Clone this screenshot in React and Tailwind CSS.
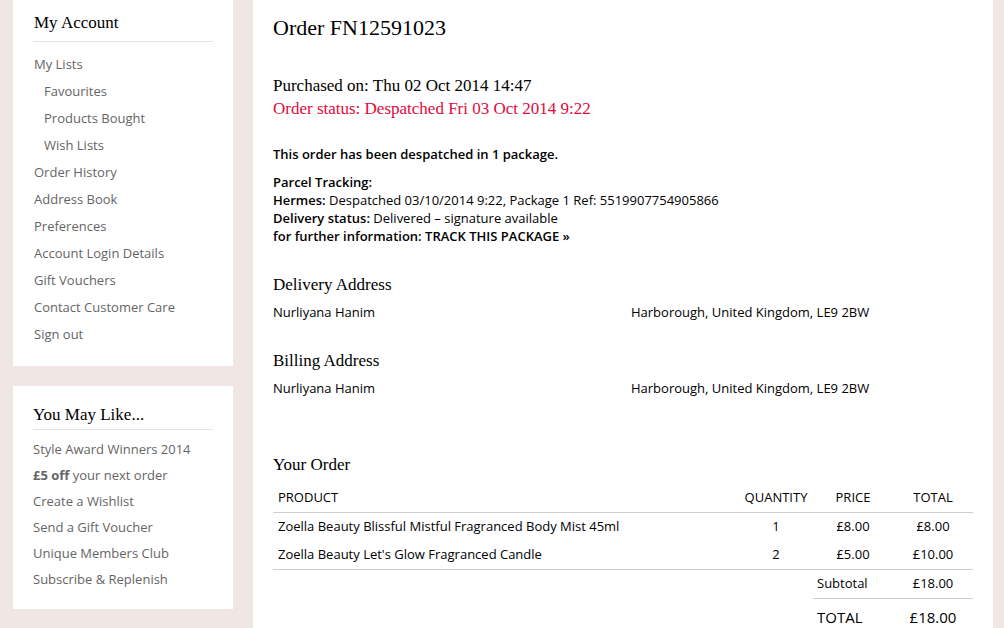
import React from "react";

const ACCOUNT_LINKS = [
  { label: "My Lists" },
  { label: "Favourites", sub: true },
  { label: "Products Bought", sub: true },
  { label: "Wish Lists", sub: true },
  { label: "Order History" },
  { label: "Address Book" },
  { label: "Preferences" },
  { label: "Account Login Details" },
  { label: "Gift Vouchers" },
  { label: "Contact Customer Care" },
  { label: "Sign out" },
];

const LIKE_LINKS = [
  "Style Award Winners 2014",
  "£5 off",
  "Create a Wishlist",
  "Send a Gift Voucher",
  "Unique Members Club",
  "Subscribe & Replenish",
];

const ITEMS = [
  { name: "Zoella Beauty Blissful Mistful Fragranced Body Mist 45ml", qty: 1, price: "£8.00", total: "£8.00" },
  { name: "Zoella Beauty Let's Glow Fragranced Candle", qty: 2, price: "£5.00", total: "£10.00" },
];

const serif = "font-['Liberation_Serif',Georgia,serif]";

function Sidebar() {
  return (
    <aside className="w-[220px] shrink-0 flex flex-col gap-[20px]">
      <div className="bg-white px-[20px] pt-[11px] pb-[18px]">
        <h2 className={`${serif} text-[17px] leading-[24px] text-black pl-px`}>My Account</h2>
        <div className="border-b border-[#e4e4e4] mt-[6px] mb-[9px]" />
        <ul>
          {ACCOUNT_LINKS.map((l) => (
            <li
              key={l.label}
              className={`text-[13px] leading-[27px] text-[#656565] ${l.sub ? "pl-[11px]" : "pl-px"}`}
            >
              {l.label}
            </li>
          ))}
        </ul>
      </div>

      <div className="bg-white px-[20px] pt-[17px] pb-[17px]">
        <h2 className={`${serif} text-[17px] leading-[24px] text-black`}>You May Like...</h2>
        <div className="border-b border-[#e4e4e4] mt-[2px] mb-[6px]" />
        <ul>
          {LIKE_LINKS.map((l) => (
            <li key={l} className="text-[13px] leading-[26px] text-[#656565]">
              {l === "£5 off" ? (
                <>
                  <span className="font-bold">£5 off</span> your next order
                </>
              ) : (
                l
              )}
            </li>
          ))}
        </ul>
      </div>
    </aside>
  );
}

function Address({ title }) {
  return (
    <>
      <h3 className={`${serif} text-[17px] leading-[24px] mt-[28px]`}>{title}</h3>
      <p className="text-[13px] leading-[18px] mt-[6px] flex">
        <span className="w-[358px] shrink-0">Nurliyana Hanim</span>
        <span>Harborough, United Kingdom, LE9 2BW</span>
      </p>
    </>
  );
}

function OrderTable() {
  return (
    <table className="w-[700px] table-fixed border-collapse text-[13px] mt-[7px]">
      <colgroup>
        <col className="w-[466px]" />
        <col className="w-[74px]" />
        <col className="w-[80px]" />
        <col className="w-[80px]" />
      </colgroup>
      <thead>
        <tr className="h-[28px] border-b border-[#cfcfcf]">
          <th className="font-normal text-left pl-[5px]">PRODUCT</th>
          <th className="font-normal text-center">QUANTITY</th>
          <th className="font-normal text-center">PRICE</th>
          <th className="font-normal text-center">TOTAL</th>
        </tr>
      </thead>
      <tbody>
        {ITEMS.map((it, i) => (
          <tr
            key={it.name}
            className={i === ITEMS.length - 1 ? "h-[28px] border-b border-[#cfcfcf]" : "h-[29px]"}
          >
            <td className="pl-[5px]">{it.name}</td>
            <td className="text-center">{it.qty}</td>
            <td className="text-center">{it.price}</td>
            <td className="text-center">{it.total}</td>
          </tr>
        ))}
        <tr className="h-[29px]">
          <td />
          <td />
          <td className="pl-[4px] border-b border-[#cfcfcf]">Subtotal</td>
          <td className="text-center border-b border-[#cfcfcf]">£18.00</td>
        </tr>
        <tr className="h-[38px] text-[15px]">
          <td />
          <td />
          <td className="pl-[4px]">TOTAL</td>
          <td className="text-center">£18.00</td>
        </tr>
      </tbody>
    </table>
  );
}

export default function App() {
  return (
    <div className="min-h-screen w-[1004px] bg-[#f0e7e5] flex pl-[13px] gap-[20px] font-['Open_Sans',sans-serif] text-black overflow-hidden">
      <Sidebar />
      <main className="w-[740px] shrink-0 bg-white min-h-[628px] pl-[20px]">
        <h1 className={`${serif} text-[22px] leading-[30px] mt-[13px]`}>Order FN12591023</h1>
        <div className={`${serif} text-[17px] leading-[23px] mt-[31px]`}>
          <p>Purchased on: Thu 02 Oct 2014 14:47</p>
          <p className="text-[#e3093b]">Order status: Despatched Fri 03 Oct 2014 9:22</p>
        </div>

        <p className="text-[13px] leading-[18px] font-semibold mt-[25px]">
          This order has been despatched in 1 package.
        </p>
        <div className="text-[13px] leading-[18px] mt-[10px]">
          <p className="font-semibold">Parcel Tracking:</p>
          <p>
            <span className="font-semibold">Hermes:</span> Despatched 03/10/2014 9:22, Package 1 Ref: 5519907754905866
          </p>
          <p>
            <span className="font-semibold">Delivery status:</span> Delivered – signature available
          </p>
          <p className="font-semibold">for further information: TRACK THIS PACKAGE »</p>
        </div>

        <Address title="Delivery Address" />
        <Address title="Billing Address" />

        <h3 className={`${serif} text-[17px] leading-[24px] mt-[56px]`}>Your Order</h3>
        <OrderTable />
      </main>
    </div>
  );
}
